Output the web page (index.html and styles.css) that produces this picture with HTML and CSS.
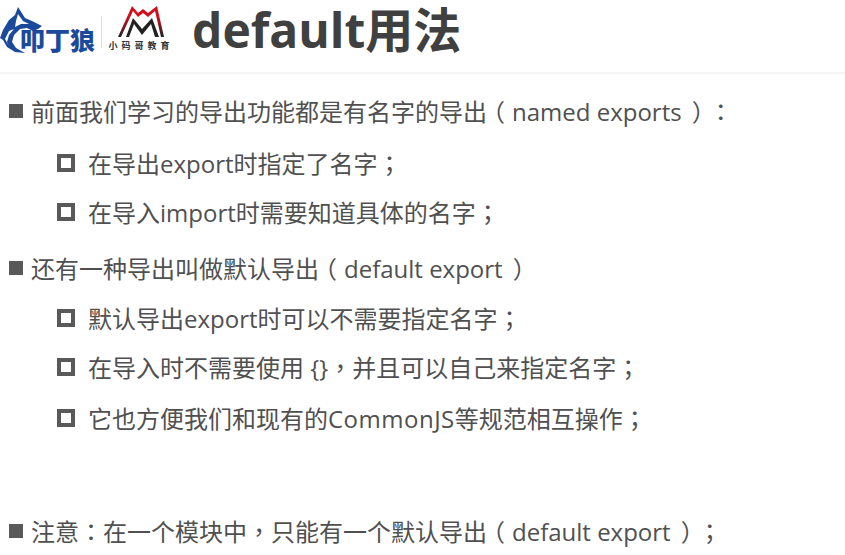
FILE: index.html
```html
<!DOCTYPE html>
<html>
<head lang="en">
    <meta charset="UTF-8">
    <title>default用法</title>
    <link rel="stylesheet" href="styles.css">
</head>
<body>
<div class="header">
    <div class="logo-wolf">
        <svg class="wolf-head" width="62" height="54" viewBox="0 0 62 54">
            <path d="M18 5 L25 16 L32 19 L42 24 L38 27 L33 29 L27 26 L20 27 L14 33 L12 40 L16 46 L25 51 L15 50 L7 45 L3 38 L0 36 L3 28 L9 18 L15 13 Z" fill="#1b4a9c"/>
            <path d="M18 12 L23 19 L29 22 L21 22 L15 25 L16 19 Z" fill="#fff"/>
            <path d="M14 27 L9 33 L7 40 L9 44 L5 37 L9 29 Z" fill="#fff"/>
        </svg>
        <span class="wolf-name">叩丁狼</span>
    </div>
    <div class="logo-line"></div>
    <div class="logo-mj">
        <svg width="46" height="32" viewBox="0 0 46 32">
            <defs>
                <linearGradient id="mjRed" x1="0" y1="0" x2="0" y2="1">
                    <stop offset="0.35" stop-color="#d0111b"/>
                    <stop offset="0.95" stop-color="#222"/>
                </linearGradient>
            </defs>
            <path d="M0 32 L14 1 L20 8 L25 4 L30 8 L39 1 L46 32 L43 32 L37 6 L30 12 L25 8 L20 12 L15 6 L3 32 Z" fill="url(#mjRed)"/>
            <path d="M8 32 L15 13 L24 24 L34 13 L41 32 L37 32 L33 19 L24 30 L16 19 L11 32 Z" fill="#222"/>
        </svg>
        <span class="mj-name">小码哥教育</span>
    </div>
    <h1>default用法</h1>
</div>
<ul class="list">
    <li class="lv1 r1"><span>前面我们学习的导出功能都是有名字的导出<i class="po">（</i>named exports<i class="pc">）</i><i>：</i></span></li>
    <li class="lv2 r2"><span>在导出export时指定了名字<i>；</i></span></li>
    <li class="lv2 r3"><span>在导入import时需要知道具体的名字<i>；</i></span></li>
    <li class="lv1 r4"><span>还有一种导出叫做默认导出<i class="po">（</i>default export<i class="pc">）</i></span></li>
    <li class="lv2 r5"><span>默认导出export时可以不需要指定名字<i>；</i></span></li>
    <li class="lv2 r3"><span>在导入时不需要使用 {}<i>，</i>并且可以自己来指定名字<i>；</i></span></li>
    <li class="lv2 r7"><span>它也方便我们和现有的<b>CommonJS</b>等规范相互操作<i>；</i></span></li>
    <li class="lv1 r8"><span>注意<i>：</i>在一个模块中<i>，</i>只能有一个默认导出<i class="po">（</i>default export<i class="pc">）</i><i>；</i></span></li>
</ul>
</body>
</html>
```

FILE: styles.css
```css
body, ul, li, h1 {
    margin: 0;
    padding: 0;
}
body {
    background-color: white;
    color: #404040;
    font-family: "Open Sans", "Noto Sans CJK SC", sans-serif;
    overflow: hidden;
}
.header {
    display: flex;
    align-items: flex-start;
    height: 72px;
    border-bottom: 2px solid #f5f5f5;
}
.logo-wolf {
    display: flex;
    align-items: flex-end;
    width: 100px;
    height: 54px;
    margin-top: 2px;
}
.wolf-head {
    flex: none;
}
.wolf-name {
    margin-left: -42px;
    margin-bottom: 4px;
    color: #1b4a9c;
    font: 900 25px/26px "Noto Sans CJK SC", sans-serif;
    white-space: nowrap;
}
.logo-line {
    width: 1px;
    height: 32px;
    margin: 16px 0 0 1px;
    background-color: #ddd;
}
.logo-mj {
    display: flex;
    flex-direction: column;
    align-items: center;
    width: 66px;
    margin: 5px 0 0 6px;
}
.mj-name {
    margin-top: 3px;
    color: #333;
    font: bold 9px/11px "Noto Sans CJK SC", sans-serif;
    letter-spacing: 4px;
    white-space: nowrap;
}
h1 {
    margin: 0 0 0 18px;
    font-size: 48px;
    line-height: 60px;
    font-weight: bold;
    white-space: nowrap;
}
.list {
    list-style-type: none;
}
.list li {
    display: flex;
    align-items: center;
    height: 32px;
    font-size: 24px;
    line-height: 32px;
    color: #505050;
    white-space: pre;
}
.list li::before {
    content: "";
    flex: none;
}
.list i {
    font-style: normal;
    font-family: "Noto Sans CJK TC", sans-serif;
}
.list b {
    font-weight: normal;
    letter-spacing: 0.5px;
}
.list .po, .list .pc {
    font-feature-settings: "halt";
}
.list .po {
    padding: 0 7px 0 6px;
}
.list .pc {
    padding: 0 5px 0 10px;
}
.lv1 {
    padding-left: 9px;
}
.lv1::before {
    width: 14px;
    height: 14px;
    margin-right: 8px;
    background-color: #595959;
}
.lv2 {
    padding-left: 57px;
}
.lv2::before {
    width: 10px;
    height: 10px;
    margin-right: 13px;
    border: 4px solid #595959;
}
.r1 { margin-top: 21px; }
.r2 { margin-top: 20px; }
.r3 { margin-top: 17px; }
.r4 { margin-top: 24px; }
.r5 { margin-top: 18px; }
.r7 { margin-top: 19px; }
.r8 { margin-top: 81px; }
```
